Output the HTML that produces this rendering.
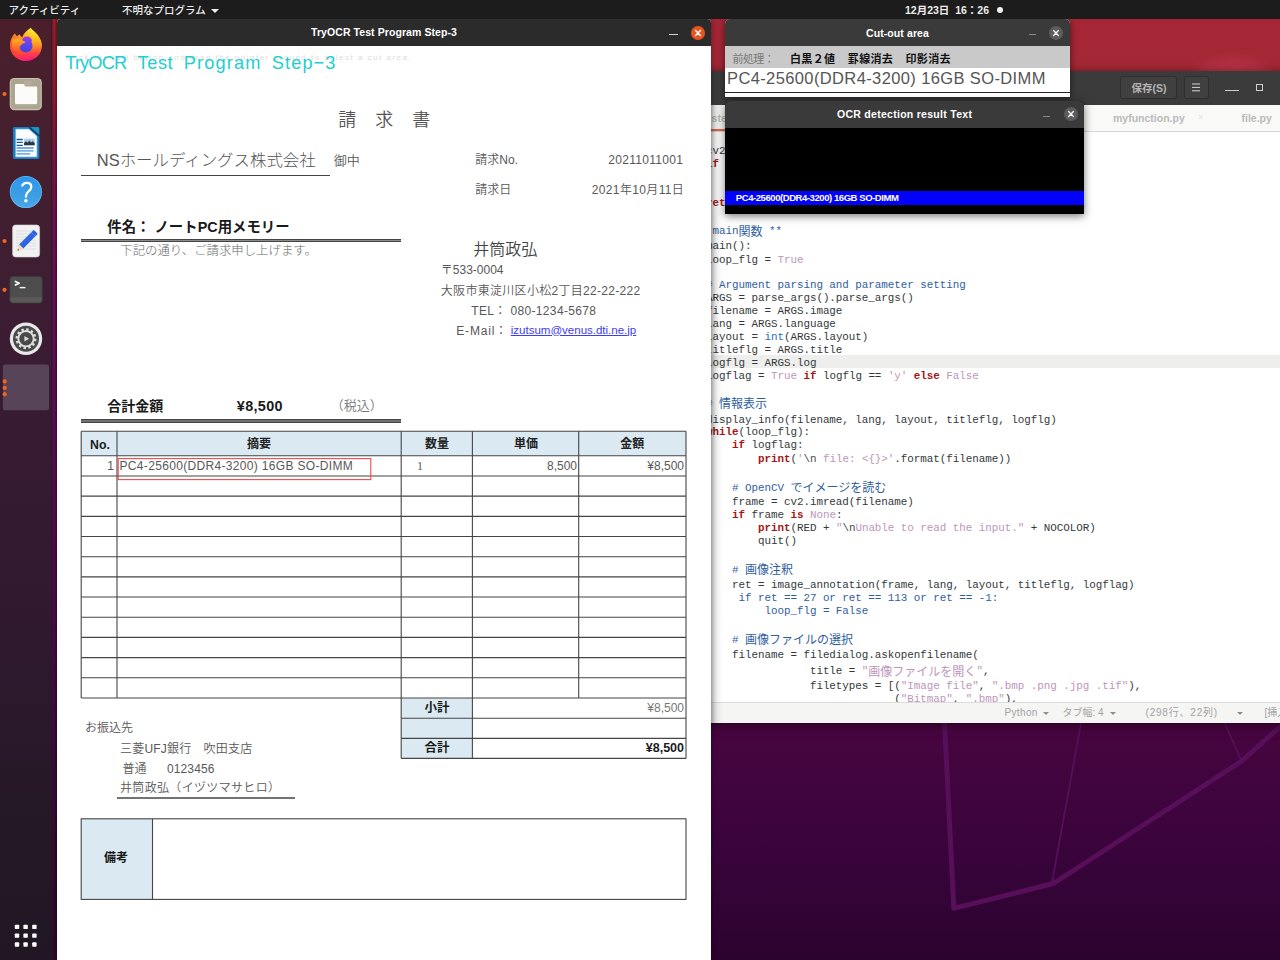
<!DOCTYPE html>
<html lang="ja">
<head>
<meta charset="utf-8">
<title>TryOCR Test Program Step-3</title>
<style>
*{margin:0;padding:0;box-sizing:border-box}
html,body{width:1280px;height:960px;overflow:hidden;background:#2c0a2e}
body{position:relative;font-family:"Liberation Sans","Noto Sans CJK JP",sans-serif;color:#222}
.abs{position:absolute}
.t{position:absolute;white-space:nowrap;line-height:1}
/* wallpaper */
#wall{left:0;top:0;width:1280px;height:960px;background:linear-gradient(180deg,#a62434 0px,#a32836 70px,#8d1f48 200px,#77165a 400px,#5c0f55 600px,#47063f 720px,#3a0837 820px,#2b0a2b 960px)}
/* top bar */
#topbar{left:0;top:0;width:1280px;height:19px;background:#1c1c1c;color:#ececec;font-size:10.5px;font-weight:500}
.wt{color:#fff;font-weight:bold;font-size:10.5px}
.bd{font-weight:bold}
.lt{font-weight:300}
.bn{top:34.6px;font-size:18.2px;color:#22cfcf}
/*GCSS*/
.cl{position:absolute;margin:0;white-space:pre;line-height:1;font-family:"Liberation Mono","Noto Sans CJK JP",monospace;font-size:10.9px;letter-spacing:-0.041px;color:#33393b}
.cl .c{color:#2f5e9e}
.cl .k{color:#a51616;font-weight:bold}
.cl .s{color:#bd96b9}
.cl .b{color:#2b72b0}
.cl .e{color:#4a4a4a}
.cl .j{font-size:12px;line-height:0;letter-spacing:0;position:relative;top:1.4px}
/*GCSSEND*/
/* dock */
#dock{left:0;top:19px;width:50.8px;height:941px;background:linear-gradient(180deg,#4a1f2b 0,#44202f 150px,#3a1c33 330px,#30192f 600px,#241826 800px,#211724 941px)}
</style>
</head>
<body>
<div id="wall" class="abs"></div>
<div class="abs" style="left:1190px;top:52px;width:84px;height:40px;border-radius:50%;background:radial-gradient(ellipse at center,rgba(200,60,85,.55) 0,rgba(200,60,85,.3) 45%,rgba(200,60,85,0) 72%)"></div>
<div class="abs" style="left:711px;top:700px;width:569px;height:260px;background:linear-gradient(180deg,#4a0541 0,#480540 23px,#3e043d 110px,#37043a 170px,#2f0332 230px,#2c022e 260px)"></div>
<svg class="abs" style="left:711px;top:700px" width="569" height="260" viewBox="711 700 569 260">
<g fill="none" stroke="#560f58" stroke-linejoin="round" stroke-linecap="round">
<path d="M944.500 722 L953.800 908.400 L1053.400 883.500 L1241.500 761.200 L1282 725" stroke-width="5"/>
<path d="M1081.200 722 L1051.800 883.500" stroke-width="1.800"/>
<path d="M1224.300 722 L1241.500 761.200" stroke-width="1.800"/>
</g>
</svg>
<div class="abs" style="left:50px;top:19px;width:9px;height:941px;background:linear-gradient(180deg,#aa212c 0,#a21e34 70px,#8e1847 130px,#7e1357 200px,#71105d 290px,#660e5d 400px,#540b51 580px,#400a40 760px,#2f0a30 941px)"></div>
<div class="abs" style="left:54px;top:19px;width:4px;height:941px;background:linear-gradient(90deg,rgba(0,0,0,0),rgba(0,0,0,.35))"></div>
<!--GEDIT-START-->
<div id="gedit" class="abs" style="left:640px;top:71px;width:700px;height:652px;background:#fff;box-shadow:0 2px 10px rgba(0,0,0,.5)">
<div class="abs" style="left:0;top:0;width:700px;height:33.5px;background:#3b3b3b"></div>
<div class="abs" style="left:480px;top:5px;width:57px;height:23px;border:1px solid #2e2e2e;border-radius:3px;background:#404040"></div>
<span class="t" style="left:491.5px;top:12px;font-size:10.5px;color:#b4b4b4;font-weight:bold">保存(S)</span>
<div class="abs" style="left:543.5px;top:5px;width:25px;height:23px;border:1px solid #2e2e2e;border-radius:3px;background:#404040"></div>
<svg class="abs" style="left:551px;top:12px" width="10" height="9" viewBox="0 0 10 9"><path d="M1 1H9M1 4.4H9M1 7.8H9" stroke="#d6d6d6" stroke-width="1"/></svg>
<span class="abs" style="left:585px;top:18.5px;width:14px;height:1.2px;background:#cfcfcf"></span>
<span class="abs" style="left:616px;top:12.5px;width:7px;height:7px;border:1.2px solid #cfcfcf"></span>
<div class="abs" style="left:0;top:33.5px;width:700px;height:27px;background:#f9f9f8;border-bottom:1.5px solid #d6d6d4"></div>
<div class="abs" style="left:0;top:57.5px;width:90px;height:2.5px;background:#e9664a"></div>
<span class="t" style="left:36px;top:42px;font-size:10.5px;color:#bdbdbd;font-weight:bold">tryocr_step3.py</span>
<span class="t" style="left:473px;top:42px;font-size:10.5px;color:#b9b9b9;font-weight:bold">myfunction.py</span>
<span class="t" style="left:558px;top:42px;font-size:9px;color:#e2e2e2">×</span>
<span class="t" style="left:601.5px;top:42px;font-size:10.5px;color:#b9b9b9;font-weight:bold">file.py</span>
<div class="abs" style="left:0;top:284px;width:700px;height:13px;background:#eeeeec"></div>
<div id="code" class="abs" style="left:0;top:60px;width:700px;height:571px;overflow:hidden">
<pre class="cl" style="left:40.0px;top:15.4px">    cv2.destroyAllWindows()</pre>
<pre class="cl" style="left:40.0px;top:28.1px">    <span class="k">if</span> key == 27:</pre>
<pre class="cl" style="left:40.0px;top:67.1px">    <span class="k">return</span> ret</pre>
<pre class="cl" style="left:40.0px;top:95.4px"><span class="c"># ** main<span class="j">関数</span> **</span></pre>
<pre class="cl" style="left:40.0px;top:110.4px"><span class="k">def</span> main():</pre>
<pre class="cl" style="left:40.0px;top:123.6px">    loop_flg = <span class="s">True</span></pre>
<pre class="cl" style="left:40.0px;top:149.1px"><span class="c">    # Argument parsing and parameter setting</span></pre>
<pre class="cl" style="left:40.0px;top:162.1px">    ARGS = parse_args().parse_args()</pre>
<pre class="cl" style="left:40.0px;top:175.0px">    filename = ARGS.image</pre>
<pre class="cl" style="left:40.0px;top:187.9px">    lang = ARGS.language</pre>
<pre class="cl" style="left:40.0px;top:200.8px">    layout = <span class="b">int</span>(ARGS.layout)</pre>
<pre class="cl" style="left:40.0px;top:213.7px">    titleflg = ARGS.title</pre>
<pre class="cl" style="left:40.0px;top:226.6px">    logflg = ARGS.log</pre>
<pre class="cl" style="left:40.0px;top:239.5px">    logflag = <span class="s">True</span> <span class="k">if</span> logflg == <span class="s">'y'</span> <span class="k">else</span> <span class="s">False</span></pre>
<pre class="cl" style="left:40.0px;top:267.9px"><span class="c">    # <span class="j">情報表示</span></span></pre>
<pre class="cl" style="left:40.0px;top:283.6px">    display_info(filename, lang, layout, titleflg, logflg)</pre>
<pre class="cl" style="left:40.0px;top:296.3px">    <span class="k">while</span>(loop_flg):</pre>
<pre class="cl" style="left:40.0px;top:309.4px">        <span class="k">if</span> logflag:</pre>
<pre class="cl" style="left:40.0px;top:322.7px">            <span class="k">print</span>(<span class="s">'</span><span class="e">\n</span><span class="s"> file: &lt;{}&gt;'</span>.format(filename))</pre>
<pre class="cl" style="left:40.0px;top:351.6px"><span class="c">        # OpenCV <span class="j">でイメージを読む</span></span></pre>
<pre class="cl" style="left:40.0px;top:366.1px">        frame = cv2.imread(filename)</pre>
<pre class="cl" style="left:40.0px;top:379.1px">        <span class="k">if</span> frame <span class="k">is</span> <span class="s">None</span>:</pre>
<pre class="cl" style="left:40.0px;top:392.1px">            <span class="k">print</span>(RED + <span class="s">"</span><span class="e">\n</span><span class="s">Unable to read the input."</span> + NOCOLOR)</pre>
<pre class="cl" style="left:40.0px;top:405.0px">            quit()</pre>
<pre class="cl" style="left:40.0px;top:434.1px"><span class="c">        # <span class="j">画像注釈</span></span></pre>
<pre class="cl" style="left:40.0px;top:449.1px">        ret = image_annotation(frame, lang, layout, titleflg, logflag)</pre>
<pre class="cl" style="left:40.0px;top:462.1px"><span class="c">#        if ret == 27 or ret == 113 or ret == -1:</span></pre>
<pre class="cl" style="left:40.0px;top:475.0px"><span class="c">#            loop_flg = False</span></pre>
<pre class="cl" style="left:40.0px;top:503.6px"><span class="c">        # <span class="j">画像ファイルの選択</span></span></pre>
<pre class="cl" style="left:40.0px;top:518.6px">        filename = filedialog.askopenfilename(</pre>
<pre class="cl" style="left:40.0px;top:535.4px">                    title = <span class="s">"<span class="j">画像ファイルを開く</span>"</span>,</pre>
<pre class="cl" style="left:40.0px;top:549.9px">                    filetypes = [(<span class="s">"Image file"</span>, <span class="s">".bmp .png .jpg .tif"</span>),</pre>
<pre class="cl" style="left:40.0px;top:562.9px">                                 (<span class="s">"Bitmap"</span>, <span class="s">".bmp"</span>),</pre>
</div>
<div class="abs" style="left:0;top:631px;width:700px;height:21px;background:#f5f5f4;border-top:1px solid #dcdcdc"></div>
<span class="t" style="left:364.5px;top:637px;font-size:10px;color:#a2a2a2;letter-spacing:.35px">Python</span>
<span class="t" style="left:422.5px;top:637px;font-size:10px;color:#a2a2a2">タブ幅: 4</span>
<span class="t" style="left:505.5px;top:637px;font-size:10px;color:#a2a2a2;letter-spacing:.8px">(298行、22列)</span>
<span class="t" style="left:624.5px;top:637px;font-size:10px;color:#a2a2a2">[挿入]</span>
<span class="abs" style="left:402.5px;top:641px;width:0;height:0;border-left:3.2px solid transparent;border-right:3.2px solid transparent;border-top:3.6px solid #8e8e8e"></span>
<span class="abs" style="left:469.5px;top:641px;width:0;height:0;border-left:3.2px solid transparent;border-right:3.2px solid transparent;border-top:3.6px solid #8e8e8e"></span>
<span class="abs" style="left:596.5px;top:641px;width:0;height:0;border-left:3.2px solid transparent;border-right:3.2px solid transparent;border-top:3.6px solid #8e8e8e"></span>
<div class="abs" style="left:71px;top:33.5px;width:12px;height:618.5px;background:linear-gradient(90deg,rgba(0,0,0,.2),rgba(0,0,0,.09) 35%,rgba(0,0,0,.03) 70%,rgba(0,0,0,0))"></div>
</div>
<!--GEDIT-END-->
<!--MAIN-START-->
<div id="main" class="abs" style="left:57.3px;top:19px;width:653.7px;height:941px;background:#fff;border-radius:4px 4px 0 0;box-shadow:0 0 6px rgba(0,0,0,.45)">
<div class="abs" style="left:0;top:0;width:654px;height:26.5px;background:#2b2b2b;border-radius:4px 4px 0 0"></div>
<span class="t wt" style="left:253.7px;top:8.3px;letter-spacing:.08px">TryOCR Test Program Step-3</span>
<span class="abs" style="left:612px;top:14.5px;width:9px;height:1.5px;background:#d0d0d0"></span>
<span class="abs" style="left:633.5px;top:6.5px;width:14px;height:14px;border-radius:50%;background:#e8541f"></span>
<svg class="abs" style="left:633.5px;top:6.5px" width="14" height="14" viewBox="0 0 14 14"><path d="M4.6 4.6 L9.4 9.4 M9.4 4.6 L4.6 9.4" stroke="#fff" stroke-width="1.4" stroke-linecap="round"/></svg>
<!-- banner -->
<span class="t" style="left:8px;top:34.5px;font-size:8px;color:#dcdcdc;letter-spacing:1.49px">Click the left button and drag the pointer around to select a cut area.</span>
<span class="t bn" style="left:8px;letter-spacing:-.85px">TryOCR</span>
<span class="t bn" style="left:80.3px;letter-spacing:.55px">Test</span>
<span class="t bn" style="left:126.5px;letter-spacing:1.15px">Program</span>
<span class="t bn" style="left:214.5px;letter-spacing:1.1px">Step&#8722;3</span>
<!-- invoice -->
<div id="inv" class="abs" style="left:0;top:0;width:654px;height:941px;color:#585858;font-weight:350">
<span class="t" style="left:281px;top:92px;font-size:18px;letter-spacing:19px;color:#555">請求書</span>
<span class="t lt" style="left:39.5px;top:132.6px;font-size:16.45px;color:#555">NSホールディングス株式会社</span>
<span class="t" style="left:276.5px;top:134.5px;font-size:13px;color:#555">御中</span>
<span class="abs" style="left:24px;top:156px;width:249px;height:1.3px;background:#444"></span>
<span class="t" style="left:418px;top:135px;font-size:12px">請求No.</span>
<span class="t" style="left:551px;top:135px;font-size:12px;letter-spacing:.3px">20211011001</span>
<span class="t" style="left:418px;top:164.5px;font-size:12px">請求日</span>
<span class="t" style="left:534.5px;top:164.5px;font-size:12px;letter-spacing:.35px">2021年10月11日</span>
<span class="t bd" style="left:50px;top:201px;font-size:14.4px;color:#1a1a1a">件名： ノートPC用メモリー</span>
<span class="abs" style="left:24px;top:219.5px;width:320px;height:3.4px;background:linear-gradient(180deg,#444 0,#444 30%,#8c8c8c 42%,#8c8c8c 58%,#444 70%,#444 100%)"></span>
<span class="t" style="left:63px;top:226px;font-size:12.4px;color:#6a6a6a;font-weight:300">下記の通り、ご請求申し上げます。</span>
<span class="t" style="left:416px;top:222.5px;font-size:16px;color:#444">井筒政弘</span>
<span class="t" style="left:383.5px;top:245px;font-size:12px">〒533-0004</span>
<span class="t" style="left:383.5px;top:266px;font-size:12px;letter-spacing:.3px">大阪市東淀川区小松2丁目22-22-222</span>
<span class="t" style="left:414px;top:285.5px;font-size:12px;letter-spacing:.35px">TEL： 080-1234-5678</span>
<span class="t" style="left:399px;top:305.5px;font-size:12px;letter-spacing:.8px">E-Mail：</span>
<span class="t" style="left:453.5px;top:305.5px;font-size:11.5px;color:#3c3cf0;text-decoration:underline">izutsum@venus.dti.ne.jp</span>
<span class="t bd" style="left:50px;top:380px;font-size:14px;color:#1a1a1a">合計金額</span>
<span class="t bd" style="left:179.5px;top:379.6px;font-size:14.4px;letter-spacing:.35px;color:#1a1a1a">¥8,500</span>
<span class="t" style="left:273.5px;top:380.3px;font-size:13px;color:#777">（税込）</span>
<span class="abs" style="left:24px;top:400.3px;width:320px;height:3.4px;background:linear-gradient(180deg,#444 0,#444 30%,#8c8c8c 42%,#8c8c8c 58%,#444 70%,#444 100%)"></span>
<!--TABLE-START-->
<div id="inv2" class="abs" style="left:-57.3px;top:-19px;width:1280px;height:960px;color:#585858;font-weight:350">
<svg class="abs" style="left:0;top:0" width="1280" height="960" viewBox="0 0 1280 960" shape-rendering="geometricPrecision">
<rect x="81.2" y="431.3" width="604.8" height="24.5" fill="#dbeaf2"/>
<rect x="401.2" y="698.0" width="71.2" height="60.4" fill="#dbeaf2"/>
<rect x="81.2" y="818.8" width="71.3" height="80.6" fill="#dbeaf2"/>
<g stroke="#454545" stroke-width="1.1" fill="none">
<path d="M81.2 431.3H686"/>
<path d="M81.2 455.80H686"/>
<path d="M81.2 475.98H686"/>
<path d="M81.2 496.16H686"/>
<path d="M81.2 516.34H686"/>
<path d="M81.2 536.52H686"/>
<path d="M81.2 556.70H686"/>
<path d="M81.2 576.88H686"/>
<path d="M81.2 597.06H686"/>
<path d="M81.2 617.24H686"/>
<path d="M81.2 637.42H686"/>
<path d="M81.2 657.60H686"/>
<path d="M81.2 677.78H686"/>
<path d="M81.2 697.96H686"/>
<path d="M81.2 431.3V698.0"/>
<path d="M686 431.3V758.4"/>
<path d="M117 431.3V698.0"/>
<path d="M401.2 431.3V758.4"/>
<path d="M472.4 431.3V758.4"/>
<path d="M578.7 431.3V698.0"/>
<path d="M401.2 718.2H686"/>
<path d="M401.2 738.4H686"/>
<path d="M401.2 758.4H686"/>
<rect x="81.2" y="818.8" width="604.8" height="80.6"/>
<path d="M152.5 818.8V899.4"/>
</g>
<rect x="118.2" y="458.6" width="252.6" height="21" fill="none" stroke="#f04a4a" stroke-width="1.1"/>
<path d="M117 798H295" stroke="#444" stroke-width="1.3"/>
</svg>
<span class="t bd" style="left:0px;width:200px;text-align:center;top:438.6px;font-size:12.3px;color:#1c1c1c">No.</span>
<span class="t bd" style="left:159px;width:200px;text-align:center;top:438.4px;font-size:12px;color:#222">摘要</span>
<span class="t bd" style="left:337px;width:200px;text-align:center;top:438.4px;font-size:12px;color:#222">数量</span>
<span class="t bd" style="left:426px;width:200px;text-align:center;top:438.4px;font-size:12px;color:#222">単価</span>
<span class="t bd" style="left:532.3px;width:200px;text-align:center;top:438.4px;font-size:12px;color:#222">金額</span>
<span class="t" style="right:1166px;top:460.3px;font-size:12px;">1</span>
<span class="t" style="left:119.5px;top:460.3px;font-size:12px;letter-spacing:.33px">PC4-25600(DDR4-3200) 16GB SO-DIMM</span>
<span class="t" style="left:417px;top:460.3px;font-size:12px;font-family:'Liberation Serif',serif">1</span>
<span class="t" style="right:703px;top:460.3px;font-size:12px;">8,500</span>
<span class="t" style="right:596px;top:460.3px;font-size:12px;">¥8,500</span>
<span class="t bd" style="left:337px;width:200px;text-align:center;top:701.5px;font-size:12.5px;color:#1a1a1a">小計</span>
<span class="t" style="right:596px;top:701.8px;font-size:12px;color:#777">¥8,500</span>
<span class="t bd" style="left:337px;width:200px;text-align:center;top:742.1px;font-size:12.5px;color:#1a1a1a">合計</span>
<span class="t bd" style="right:596px;top:742.1px;font-size:12.5px;color:#1a1a1a">¥8,500</span>
<span class="t" style="left:85px;top:722.0px;font-size:12px;">お振込先</span>
<span class="t" style="left:120px;top:743.0px;font-size:12px;letter-spacing:.2px">三菱UFJ銀行　吹田支店</span>
<span class="t" style="left:122.5px;top:762.8px;font-size:12px;">普通</span>
<span class="t" style="left:166.9px;top:762.8px;font-size:12px;letter-spacing:.15px">0123456</span>
<span class="t" style="left:120px;top:782.0px;font-size:12px;letter-spacing:.33px">井筒政弘（イヅツマサヒロ）</span>
<span class="t bd" style="left:16px;width:200px;text-align:center;top:852.4px;font-size:12px;color:#1a1a1a">備考</span>
</div>
<!--TABLE-END-->
</div>
</div>
<!--MAIN-END-->
<!--CUTOUT-START-->
<div id="cutout" class="abs" style="left:724.5px;top:19px;width:345.5px;height:78px;background:#fff;border-radius:5px 5px 0 0;box-shadow:0 1px 7px rgba(0,0,0,.55)">
<div class="abs" style="left:0;top:0;width:345.5px;height:27px;background:#3a3a3a;border-radius:5px 5px 0 0"></div>
<span class="t wt" style="left:141.5px;top:8.6px;letter-spacing:.09px">Cut-out area</span>
<span class="abs" style="left:304px;top:15px;width:7px;height:1.3px;background:#8a8a8a"></span>
<span class="abs" style="left:324.5px;top:6.5px;width:14px;height:14px;border-radius:50%;background:#5c5c5c"></span>
<svg class="abs" style="left:324.5px;top:6.5px" width="14" height="14" viewBox="0 0 14 14"><path d="M4.6 4.6 L9.4 9.4 M9.4 4.6 L4.6 9.4" stroke="#f4f4f4" stroke-width="1.4" stroke-linecap="round"/></svg>
<div class="abs" style="left:0;top:27px;width:345.5px;height:21.5px;background:#c9c9c9"></div>
<span class="t" style="left:8px;top:34.6px;font-size:11px;color:#777;letter-spacing:-.6px">前処理：</span>
<span class="t bd" style="left:65.5px;top:34.6px;font-size:11px;color:#111;letter-spacing:.33px">白黒２値</span>
<span class="t bd" style="left:123.3px;top:34.6px;font-size:11px;color:#111;letter-spacing:.33px">罫線消去</span>
<span class="t bd" style="left:181px;top:34.6px;font-size:11px;color:#111;letter-spacing:.33px">印影消去</span>
<span class="t" style="left:2.5px;top:50.9px;font-size:16.5px;color:#555;letter-spacing:.38px">PC4-25600(DDR4-3200) 16GB SO-DIMM</span>
<div class="abs" style="left:0;top:72.5px;width:345.5px;height:1.5px;background:#222"></div>
</div>
<!--CUTOUT-END-->
<!--OCR-START-->
<div id="ocr" class="abs" style="left:724.5px;top:100.8px;width:359.5px;height:113px;background:#000;border-radius:5px 5px 0 0;box-shadow:0 2px 9px rgba(0,0,0,.55)">
<div class="abs" style="left:0;top:0;width:359.5px;height:27px;background:#3a3a3a;border-radius:5px 5px 0 0"></div>
<span class="t wt" style="left:112.5px;top:8.6px;letter-spacing:.28px">OCR detection result Text</span>
<span class="abs" style="left:318.5px;top:15px;width:7px;height:1.3px;background:#8a8a8a"></span>
<span class="abs" style="left:339.5px;top:6.5px;width:14px;height:14px;border-radius:50%;background:#5c5c5c"></span>
<svg class="abs" style="left:339.5px;top:6.5px" width="14" height="14" viewBox="0 0 14 14"><path d="M4.6 4.6 L9.4 9.4 M9.4 4.6 L4.6 9.4" stroke="#f4f4f4" stroke-width="1.4" stroke-linecap="round"/></svg>
<div class="abs" style="left:0;top:90px;width:359.5px;height:14px;background:#0202fb"></div>
<span class="t bd" style="left:11.3px;top:92.3px;font-size:9.5px;color:#fff;letter-spacing:-.43px">PC4-25600(DDR4-3200) 16GB SO-DIMM</span>
</div>
<!--OCR-END-->
<div id="topbar" class="abs">
<span class="t" style="left:8.5px;top:5px">アクティビティ</span>
<span class="t" style="left:122px;top:5px">不明なプログラム</span>
<span class="abs" style="left:211px;top:8.5px;width:0;height:0;border-left:4px solid transparent;border-right:4px solid transparent;border-top:4px solid #ededed"></span>
<span class="t" style="left:905px;top:5px;font-weight:bold">12月23日&nbsp;&nbsp;16：26</span>
<span class="abs" style="left:997px;top:6.5px;width:6px;height:6px;border-radius:50%;background:#f2f2f2"></span>
</div>
<div class="abs" style="left:50.5px;top:19px;width:3px;height:941px;background:linear-gradient(90deg,rgba(40,20,36,.95),rgba(40,20,36,.45) 50%,rgba(40,20,36,0))"></div>
<div id="dock" class="abs">
<!--DOCK-START-->
<svg class="abs" style="left:0;top:0" width="52" height="941" viewBox="0 19 52 941">
<defs>
<linearGradient id="ffg" x1="0" y1="0" x2="0" y2="1"><stop offset="0" stop-color="#fff23c"/><stop offset=".25" stop-color="#ffd020"/><stop offset=".5" stop-color="#ff9a22"/><stop offset=".72" stop-color="#ff5238"/><stop offset=".9" stop-color="#fc2270"/><stop offset="1" stop-color="#f0148c"/></linearGradient>
<linearGradient id="ffl" x1="0" y1="0" x2="1" y2="0"><stop offset="0" stop-color="#ff3a30" stop-opacity=".75"/><stop offset=".45" stop-color="#ff4a30" stop-opacity=".25"/><stop offset=".7" stop-color="#ff4a30" stop-opacity="0"/></linearGradient>
<linearGradient id="ffh" x1="0" y1="0" x2="0" y2="1"><stop offset="0" stop-color="#ffb624"/><stop offset=".5" stop-color="#ff7a26"/><stop offset="1" stop-color="#ff4a3a"/></linearGradient>
<linearGradient id="ffp" x1="0" y1="0" x2="0" y2="1"><stop offset="0" stop-color="#8a3eea"/><stop offset=".45" stop-color="#5a46ea"/><stop offset="1" stop-color="#4a3fd8"/></linearGradient>
<linearGradient id="hlp" x1="0" y1="0" x2="0" y2="1"><stop offset="0" stop-color="#2a98f0"/><stop offset=".5" stop-color="#3a9ce2"/><stop offset="1" stop-color="#4aa6e8"/></linearGradient>
<linearGradient id="pen" x1="0" y1="0" x2="1" y2="1"><stop offset="0" stop-color="#3f7af0"/><stop offset="1" stop-color="#1f4fd0"/></linearGradient>
</defs>
<!-- firefox -->
<g>
<path d="M30.600 27.800C33 31 37 33 39.200 37C41.500 41 42 43.500 42 45.500C42 54 35 61 26 61C17 61 10 54 10 45.500C10 41 11.800 36.500 14.750 33.400L16.900 36.600L19.300 34.600L22.300 37.800C23 35 25.500 31.500 30.600 27.800Z" fill="url(#ffg)"/>
<path d="M30.600 27.800C33 31 37 33 39.200 37C41.500 41 42 43.500 42 45.500C42 54 35 61 26 61C17 61 10 54 10 45.500C10 41 11.800 36.500 14.750 33.400L16.900 36.600L19.300 34.600L22.300 37.800C23 35 25.500 31.500 30.600 27.800Z" fill="url(#ffl)"/>
<ellipse cx="27" cy="40.300" rx="4.900" ry="3.700" fill="#9c3bea"/>
<circle cx="25.900" cy="45.800" r="6.700" fill="url(#ffp)"/>
<path d="M12.500 39.500C14.500 38 17 38.300 19 39.300C21.200 40.200 24 40.900 25.800 42.300C23.500 43 21.300 44.300 20.100 46.300C18.800 48.800 19.300 51.800 21.500 54C16.500 53.500 12.800 50.500 12 46Z" fill="url(#ffh)"/>
</g>
<!-- files -->
<g>
<rect x="9.750" y="78" width="32.100" height="32.250" rx="4.600" fill="#c9c1b0"/>
<rect x="10.900" y="79.100" width="29.800" height="30" rx="3.600" fill="#aaa690"/>
<path d="M24 81.500c0-.6 .4-1 1-1h6c.6 0 1 .4 1 1v3.500h-8z" fill="#b9aa9c"/>
<path d="M15 85.300c0-.8 .5-1.300 1.300-1.300h6.700c.6 0 1 .2 1.300 .7l1 1.800h10.600c.8 0 1.300 .5 1.300 1.300v14.900c0 .8-.5 1.300-1.300 1.300h-19.600c-.8 0-1.300-.5-1.300-1.300z" fill="#fbfbfa"/>
<path d="M15.200 104.700h21.800" stroke="#bdb9a6" stroke-width="1"/>
</g>
<!-- writer -->
<g>
<path d="M14.400 127h15.200l9.700 8.600v21.900c0 .9-.6 1.500-1.500 1.500h-23.400c-.9 0-1.500-.6-1.500-1.500v-29c0-.9 .6-1.500 1.500-1.500z" fill="#1c7cc4"/>
<path d="M15.600 129h13.400l8 7.200v20.800h-21.400z" fill="#fdfdfd"/>
<path d="M15.600 129h13.400l8 7.200v20.800h-21.400z" fill="none" stroke="#5cc0f0" stroke-width=".7"/>
<path d="M29.600 127l9.700 8.600v-7.100c0-.9-.6-1.500-1.500-1.500z" fill="#1a93c4"/>
<path d="M29.300 127.200l10 8.800" stroke="#17325e" stroke-width="1.500"/>
<g stroke="#1c5c9c" stroke-width="1.300"><path d="M16.600 139.500h6.200M16.600 142.400h6.200M16.600 145.300h6.200"/></g>
<g stroke="#4a92da" stroke-width="1.300"><path d="M16.600 148h17M16.600 150.800h17M16.600 153.900h13.600"/></g>
<rect x="24.100" y="138.700" width="10.600" height="6.600" fill="#a6cdef"/>
<path d="M24.100 145.300v-2.200l2-1.800 1.600 1.400 1.600-2.200 1.800 2 1.500-1.200 2.100 1.800v2.200z" fill="#2e363e"/>
</g>
<!-- help -->
<g>
<circle cx="25.900" cy="192" r="16.100" fill="#62b8f4"/>
<circle cx="25.900" cy="192" r="15.300" fill="url(#hlp)"/>
<path d="M22.300 185.500C23.300 183.600 25 182.900 26.800 182.900C29.500 182.900 31.300 184.600 31.300 186.900C31.300 189 30 190.200 28.300 191.600C26.600 193 25.900 194 25.900 196.700" fill="none" stroke="#fff" stroke-width="2.300" stroke-linecap="round"/>
<circle cx="25.900" cy="200.700" r="1.750" fill="#fff"/>
</g>
<!-- gedit -->
<g>
<rect x="12.600" y="225" width="27" height="32" rx="3" fill="#f1f1f1"/>
<rect x="12.600" y="225" width="27" height="32" rx="3" fill="none" stroke="#d4d4d4" stroke-width=".6"/>
<g stroke="#dcdcdc" stroke-width=".8"><path d="M16 231h20M16 234h20M16 237h20M16 240h20M16 243h20M16 246h20M16 249h20"/></g>
<path d="M31.300 232.200l4.200 3.900-12.200 12.400-4.200-3.900z" fill="url(#pen)"/>
<path d="M19.100 244.600l4.200 3.900-5.200 2.600c-.5 .2-.9-.2-.7-.7z" fill="#f3d9b0"/>
<path d="M17.400 250.400l.6-1.600 1.300 1.200-1.200 .8c-.4 .2-.8-.1-.7-.4z" fill="#777"/>
<path d="M31.300 232.200l1.500-1.500c.5-.5 1.200-.5 1.700 0l2.500 2.300c.5 .5 .5 1.200 0 1.700l-1.500 1.400z" fill="#2a5fe0"/>
</g>
<!-- terminal -->
<g>
<rect x="9.900" y="276.400" width="32.300" height="26.600" rx="3.200" fill="#4d4d4d"/>
<path d="M9.900 297.300h32.300v2.500c0 1.800-1.400 3.200-3.200 3.200h-25.900c-1.800 0-3.200-1.400-3.200-3.200z" fill="#5a5a5a"/>
<rect x="9.900" y="276.400" width="32.300" height="26.600" rx="3.200" fill="none" stroke="#3e3e3e" stroke-width=".7"/>
<path d="M14.800 281.300l4.400 2-4.400 2" fill="none" stroke="#fff" stroke-width="1.500" stroke-linejoin="round"/>
<path d="M19.600 287.600h5.800" stroke="#fff" stroke-width="1.400"/>
</g>
<!-- updater -->
<g>
<circle cx="26" cy="338.700" r="16.200" fill="#e8e8e8"/>
<circle cx="26" cy="338.700" r="13" fill="#494949"/>
<circle cx="26" cy="338.700" r="9.300" fill="none" stroke="#dedede" stroke-width="2.400" stroke-dasharray="2.430 2.430"/>
<circle cx="26" cy="338.700" r="7.700" fill="none" stroke="#dedede" stroke-width="1.900"/>
<path d="M24.400 335.900l4.800 2.800-4.800 2.800z" fill="#d8d8d8"/>
</g>
<!-- highlight -->
<rect x="2.900" y="364.400" width="46.100" height="45.900" rx="2.500" fill="#584458"/>
<!-- dots -->
<g fill="#f0651f">
<circle cx="4.500" cy="94" r="2.100"/>
<circle cx="4.500" cy="241" r="2.100"/>
<circle cx="4.500" cy="289.800" r="2.100"/>
<circle cx="4.700" cy="381.400" r="2.100"/>
<circle cx="4.700" cy="387.900" r="2.100"/>
<circle cx="4.700" cy="394.200" r="2.100"/>
</g>
<!-- grid -->
<g fill="#fff">
<rect x="14.800" y="924.700" width="4.400" height="4.400" rx=".9"/><rect x="23.400" y="924.700" width="4.400" height="4.400" rx=".9"/><rect x="32.200" y="924.700" width="4.400" height="4.400" rx=".9"/>
<rect x="14.800" y="933.400" width="4.400" height="4.400" rx=".9"/><rect x="23.400" y="933.400" width="4.400" height="4.400" rx=".9"/><rect x="32.200" y="933.400" width="4.400" height="4.400" rx=".9"/>
<rect x="14.800" y="942.300" width="4.400" height="4.400" rx=".9"/><rect x="23.400" y="942.300" width="4.400" height="4.400" rx=".9"/><rect x="32.200" y="942.300" width="4.400" height="4.400" rx=".9"/>
</g>
</svg>
<!--DOCK-END-->
</div>
</body>
</html>
